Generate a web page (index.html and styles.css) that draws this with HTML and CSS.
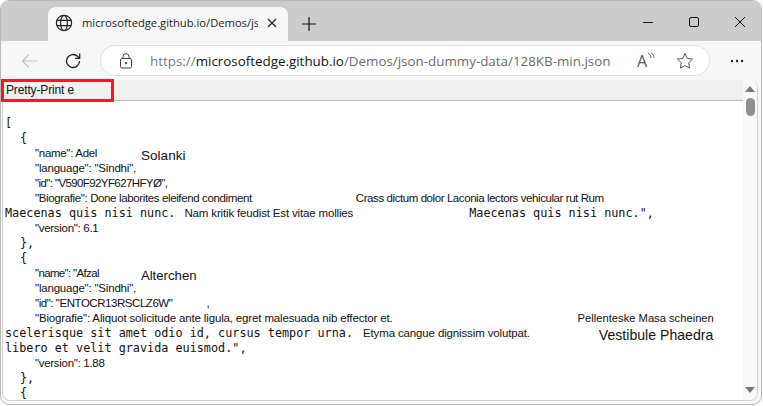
FILE: index.html
```html
<!DOCTYPE html>
<html lang="en">
<head>
<meta charset="utf-8">
<title>128KB-min.json</title>
<link rel="stylesheet" href="styles.css">
</head>
<body>
<div class="window">
  <header class="titlebar">
    <div class="tab">
      <svg class="globe" width="18" height="18" viewBox="0 0 18 18" fill="none" stroke="#222" stroke-width="1.2"><circle cx="9" cy="9" r="7.6"/><ellipse cx="9" cy="9" rx="3.4" ry="7.6"/><path d="M1.8 6.3h14.4M1.8 11.7h14.4"/></svg>
      <span class="tab-title">microsoftedge.github.io/Demos/js</span>
      <svg class="tab-close" width="10" height="10" viewBox="0 0 10 10" stroke="#222" stroke-width="1.2"><path d="M1 1l8 8M9 1l-8 8"/></svg>
    </div>
    <svg class="new-tab" width="14" height="14" viewBox="0 0 14 14" stroke="#111" stroke-width="1.2"><path d="M7 0v14M0 7h14"/></svg>
    <div class="controls">
      <svg width="12" height="12" viewBox="0 0 12 12" stroke="#111"><path d="M1 6.5h10"/></svg>
      <svg width="12" height="12" viewBox="0 0 12 12" fill="none" stroke="#111"><rect x="1.500" y="1.500" width="9" height="9" rx="1.500"/></svg>
      <svg width="12" height="12" viewBox="0 0 12 12" stroke="#111"><path d="M1 1l10 10M11 1L1 11"/></svg>
    </div>
  </header>
  <nav class="toolbar">
    <svg class="back" width="18" height="16" viewBox="0 0 18 16" fill="none" stroke="#c4c4c4" stroke-width="1.2"><path d="M17 8H1.500M8 1.500L1.500 8 8 14.500"/></svg>
    <svg class="reload" width="18" height="18" viewBox="0 0 18 18" fill="none" stroke="#222" stroke-width="1.3"><path d="M15.500 9a6.500 6.500 0 1 1-2-4.700l2 1.900"/><path d="M15.700 1.600v4.800h-4.800"/></svg>
    <div class="address">
      <svg class="lock" width="14" height="16" viewBox="0 0 14 16" fill="none" stroke="#444" stroke-width="1"><rect x="1.500" y="5.500" width="11" height="9.500" rx="1.500"/><path d="M4 5.500V3.600a3 3 0 0 1 6 0v1.900"/><circle cx="7" cy="10" r=".8" fill="#444"/></svg>
      <span class="url"><span class="url-dim">https://</span><span class="url-host">microsoftedge.github.io</span><span class="url-path">/Demos/json-dummy-data/128KB-min.json</span></span>
      <span class="read"><span class="read-a">A</span><svg width="8" height="10" viewBox="0 0 8 10" fill="none" stroke="#555" stroke-width=".9"><path d="M1 1c2 1 3 3 3 5M4 .5c2 1.500 3 3.500 3 5.500"/></svg></span>
      <svg class="star" width="18" height="18" viewBox="0 0 18 18" fill="none" stroke="#555" stroke-width="1"><path d="M9 1.500l2.300 4.900 5.200.7-3.800 3.700.9 5.300L9 13.500l-4.600 2.600.9-5.300L1.500 7.100l5.200-.7z"/></svg>
    </div>
    <svg class="more" width="14" height="4" viewBox="0 0 14 4" fill="#222"><circle cx="2" cy="2" r="1.200"/><circle cx="7" cy="2" r="1.200"/><circle cx="12" cy="2" r="1.200"/></svg>
  </nav>
  <main class="viewport">
    <div class="document">
      <div class="pretty-bar"><span class="pretty-box">Pretty-Print e</span></div>
      <div class="json">
        <div class="row mono">[</div>
        <div class="row mono i1">{</div>
        <div class="row i2 label">"name": Adel<span class="large gap-solanki">Solanki</span></div>
        <div class="row i2 label ls-lang">"language": "Sindhi",</div>
        <div class="row i2 label ls-id1">"id": "V590F92YF627HFYØ",</div>
        <div class="row i2 label ls-bio">"Biografie": Done laborites eleifend condiment<span class="gap-crass">Crass dictum dolor Laconia lectors vehicular rut Rum</span></div>
        <div class="row"><span class="mono">Maecenas quis nisi nunc.</span><span class="label gap-nam">Nam kritik feudist Est vitae mollies</span><span class="mono gap-mae">Maecenas quis nisi nunc.",</span></div>
        <div class="row i2 label">"version": 6.1</div>
        <div class="row mono i1">},</div>
        <div class="row mono i1">{</div>
        <div class="row i2 label ls-afzal">"name": "Afzal<span class="large gap-alter">Alterchen</span></div>
        <div class="row i2 label ls-lang">"language": "Sindhi",</div>
        <div class="row i2 label ls-id2">"id": "ENTOCR13RSCLZ6W"<span class="gap-comma">,</span></div>
        <div class="row i2 label ls-bio2">"Biografie": Aliquot solicitude ante ligula, egret malesuada nib effector et.<span class="gap-pell">Pellenteske Masa scheinen</span></div>
        <div class="row"><span class="mono">scelerisque sit amet odio id, cursus tempor urna.</span><span class="label gap-ety">Etyma cangue dignissim volutpat.</span><span class="large gap-vest">Vestibule Phaedra</span></div>
        <div class="row mono">libero et velit gravida euismod.",</div>
        <div class="row i2 label">"version": 1.88</div>
        <div class="row mono i1">},</div>
        <div class="row mono i1">{</div>
      </div>
    </div>
    <aside class="scrollbar">
      <span class="arrow-up"></span>
      <span class="thumb"></span>
      <span class="arrow-down"></span>
    </aside>
  </main>
</div>
</body>
</html>
```
FILE: styles.css
```css
* { box-sizing: border-box; }
html, body { margin: 0; padding: 0; background: #fff; }
body { width: 763px; height: 406px; overflow: hidden; font-family: "Liberation Sans", Arial, sans-serif; color: #111; }
.window { position: relative; width: 762px; height: 405px; border: 1px solid #b8b8b8; border-radius: 9px; overflow: hidden; background: #f7f7f7; display: flex; flex-direction: column; }
.titlebar { height: 40px; flex: none; background: #cccccc; display: flex; align-items: flex-end; padding-left: 47px; }
.tab { width: 240px; height: 34px; background: #f7f7f7; border-radius: 8px 8px 0 0; display: flex; align-items: center; padding: 0 11px 3px 7px; }
.globe { flex: none; }
.tab-title { font-family: "Open Sans", sans-serif; font-size: 11.200px; margin-left: 9px; width: 178px; white-space: nowrap; overflow: hidden; color: #222; }
.tab-close { margin-left: 9px; flex: none; }
.new-tab { margin: 0 0 10px 14px; flex: none; }
.controls { margin-left: auto; margin-right: 15px; display: flex; gap: 34px; height: 40px; padding-top: 2px; align-items: center; }
.toolbar { height: 39px; flex: none; background: #f7f7f7; display: flex; align-items: center; }
.back { margin-left: 20px; flex: none; }
.reload { margin-left: 25px; flex: none; }
.address { width: 610px; height: 31px; margin-left: 18px; background: #fff; border: 1px solid #dcdcdc; border-radius: 15px; display: flex; align-items: center; flex: none; }
.lock { margin-left: 18px; flex: none; }
.url { font-family: "Open Sans", sans-serif; font-size: 13.380px; margin-left: 17px; white-space: nowrap; width: 487px; flex: none; }
.url-dim { color: #6f7b8a; }
.url-host { color: #111; }
.url-path { color: #6c6c6c; }
.read { display: flex; align-items: flex-start; color: #555; flex: none; }
.read-a { font-family: "Open Sans", sans-serif; font-size: 16px; line-height: 18px; }
.star { margin-left: 21px; flex: none; }
.more { margin-left: 20px; flex: none; }
.viewport { flex: 1; min-height: 0; display: flex; background: #fff; margin: 0 3px 3px 1px; border: 1px solid #d2d2d2; border-top: 0; border-radius: 0 8px 8px 8px; overflow: hidden; }
.document { flex: 1; min-width: 0; }
.pretty-bar { height: 21px; background: #f0f0f0; border-bottom: 1px solid #b9b9b9; }
.pretty-box { position: absolute; left: 0; top: 78px; width: 113px; height: 23px; border: 3px solid #ed1c24; font-size: 12px; line-height: 17px; padding-left: 2px; letter-spacing: -0.15px; color: #111; background: #f0f0f0; }
.json { padding: 15px 0 0 2px; }
.row { height: 15px; line-height: 15px; white-space: nowrap; display: flex; align-items: center; }
.mono { font-family: "DejaVu Sans Mono", monospace; font-size: 11.800px; color: #111; letter-spacing: 0; }
.label { font-size: 11.500px; letter-spacing: -0.3px; color: #111; }
.large { font-size: 13.500px; letter-spacing: 0; margin-top: 4px; }
.i1 { padding-left: 15px; }
.i2 { padding-left: 30px; }
.ls-lang { letter-spacing: -0.2px; }
.ls-id1 { letter-spacing: -0.6px; }
.ls-id2 { letter-spacing: -0.45px; }
.ls-bio { letter-spacing: -0.37px; }
.ls-bio2 { letter-spacing: -0.15px; }
.ls-afzal { letter-spacing: -0.65px; }
.gap-solanki { margin-left: 44px; }
.gap-crass { margin-left: 104px; letter-spacing: -0.42px; }
.gap-nam { margin-left: 9px; letter-spacing: -0.16px; }
.gap-mae { margin-left: 116px; }
.gap-alter { margin-left: 42px; font-size: 13.200px; }
.gap-comma { margin-left: 34px; color: #000; }
.gap-pell { margin-left: 185px; font-size: 11.200px; letter-spacing: 0; }
.gap-ety { margin-left: 10px; letter-spacing: -0.14px; }
.gap-vest { margin-left: 69px; font-size: 14.100px; }
.scrollbar { width: 14px; flex: none; background: #f9f9f9; display: flex; flex-direction: column; align-items: center; padding: 6px 0 7px; }
.arrow-up { width: 0; height: 0; border: 5px solid transparent; border-top: 0; border-bottom: 6px solid #777; }
.thumb { width: 9px; height: 18px; margin-top: 6px; border-radius: 5px; background: #8f8f8f; }
.arrow-down { width: 0; height: 0; border: 5px solid transparent; border-bottom: 0; border-top: 6px solid #777; margin-top: auto; }
```
